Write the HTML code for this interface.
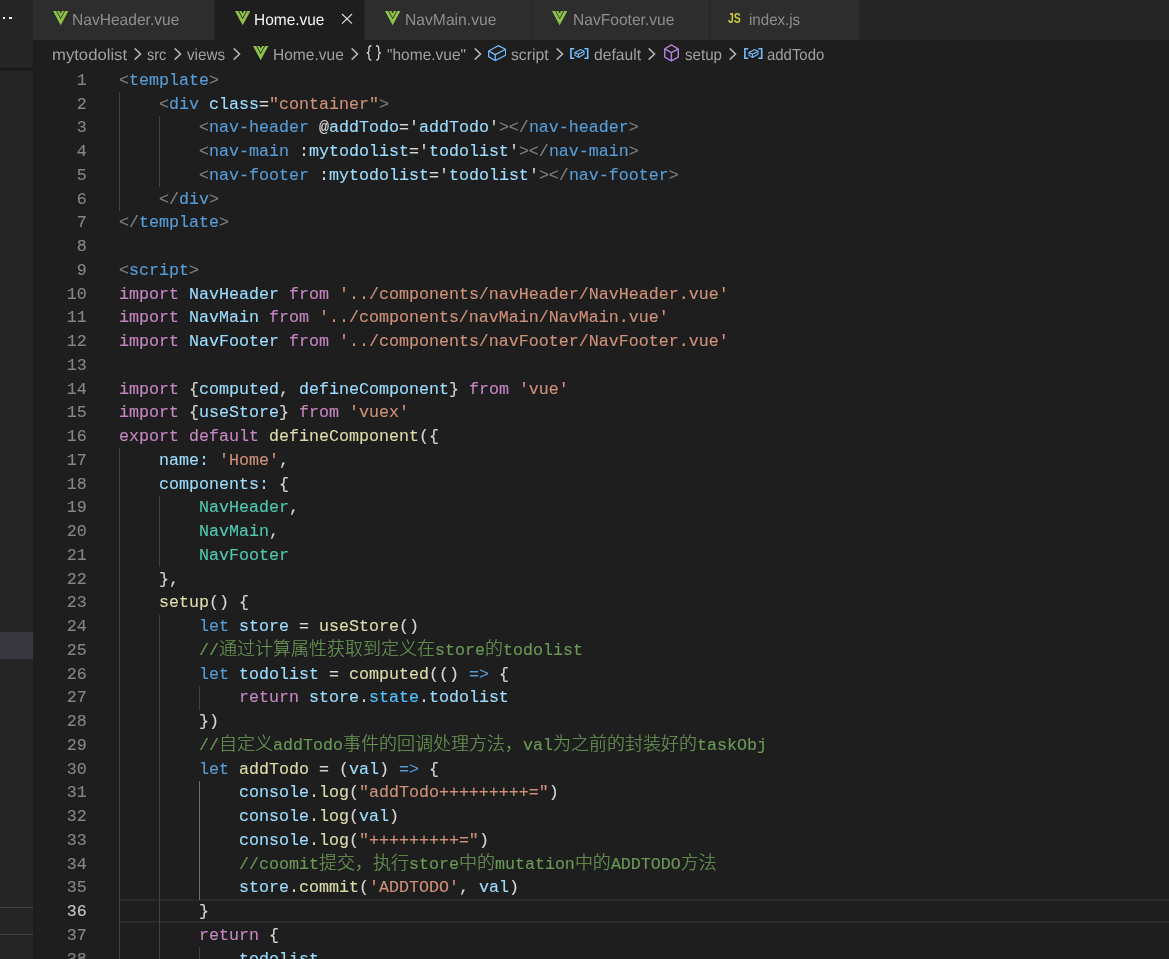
<!DOCTYPE html>
<html lang="zh-CN">
<head>
<meta charset="utf-8">
<title>Home.vue - mytodolist</title>
<style>
html,body{margin:0;padding:0;background:#1e1e1e;}
body{width:1169px;height:959px;overflow:hidden;position:relative;font-family:"Liberation Sans","Noto Sans CJK SC",sans-serif;}
#app{position:absolute;left:0;top:0;width:1169px;height:959px;will-change:transform;}
#side{position:absolute;left:0;top:0;width:33px;height:959px;background:#252526;}
#side .shadow{position:absolute;left:0;top:67px;width:33px;height:5px;background:linear-gradient(#212121 0,#212121 20%,#181818 20%,#181818 40%,#1c1c1c 40%,#1c1c1c 60%,#202020 60%,#202020 80%,#232324 80%,#232324 100%);}
#side .sel{position:absolute;left:0;top:632px;width:33px;height:27px;background:#37373d;}
#side .hr{position:absolute;left:0;width:33px;height:1px;background:#414141;}
#side .dot{position:absolute;top:16.9px;width:2.5px;height:2.3px;background:#f0f0f0;}
#tabs{position:absolute;left:33px;top:0;width:1136px;height:40px;background:#252526;}
.tab{position:absolute;top:0;height:40px;background:#2d2d2d;}
.tab.on{background:#1e1e1e;}
.tt{text-rendering:geometricPrecision;position:absolute;top:8.8px;height:24px;line-height:24px;font-size:16px;transform-origin:0 0;color:#969696;white-space:nowrap;}
.tab.on .tt{color:#ffffff;}
.vue{position:absolute;width:15.75px;height:15px;}
.jsi{position:absolute;font-weight:bold;font-size:13.8px;color:#cbcb41;line-height:14px;transform:scaleX(0.76);transform-origin:0 0;}
#bc{position:absolute;left:33px;top:40px;width:1136px;height:28px;background:#1e1e1e;}
.bt{text-rendering:geometricPrecision;position:absolute;top:43.8px;height:24px;line-height:24px;font-size:16px;transform-origin:0 0;color:#a0a0a0;white-space:nowrap;}
.chev{position:absolute;top:48px;width:8px;height:12px;}
.bi{position:absolute;}
#ed{position:absolute;left:0;top:0;width:1169px;height:959px;font-family:"Liberation Mono","Noto Sans CJK SC",monospace;font-size:16.67px;color:#d4d4d4;-webkit-text-stroke:0.14px;}
.ln{position:absolute;left:33px;width:53.7px;height:23.75px;line-height:23.75px;text-align:right;color:#858585;}
.ln.cur{color:#c6c6c6;}
.cl{position:absolute;left:119px;height:23.75px;line-height:23.75px;white-space:pre;}
.cl i{font-style:normal;font-size:18px;line-height:0;font-weight:300;}
.ig{position:absolute;width:1px;background:#404040;}
.ig.act{background:#707070;}
#curline{position:absolute;left:119px;top:899px;width:1050px;height:19.5px;border-top:2px solid #2a2a2a;border-bottom:2px solid #2a2a2a;}
.g{color:#808080}.t{color:#569cd6}.a{color:#9cdcfe}.s{color:#ce9178}.k{color:#c586c0}.b{color:#569cd6}.f{color:#dcdcaa}.c{color:#4ec9b0}.m{color:#6a9955}.n{color:#4fc1ff}
</style>
</head>
<body>
<div id="app">
<div id="side"><div class="shadow"></div><div class="dot" style="left:2.8px"></div><div class="dot" style="left:8.9px;width:3.1px"></div><div class="sel"></div><div class="hr" style="top:907px"></div><div class="hr" style="top:934px"></div></div>
<div id="tabs">
<div class="tab" style="left:0px;width:181px"></div>
<div class="tab on" style="left:181.5px;width:149.5px"></div>
<div class="tab" style="left:331.5px;width:167.5px"></div>
<div class="tab" style="left:499.5px;width:176.5px"></div>
<div class="tab" style="left:676.5px;width:149.5px"></div>
</div>
<svg class="vue" style="left:52.7px;top:10.8px" preserveAspectRatio="none" viewBox="0 0 16 15"><path fill="#8dc149" d="M0,0H3.25L7.8,8.3L12.35,0H15.6L7.8,14.2Z"/><path fill="#8dc149" d="M4.15,0H6.5L7.8,2.4L9.1,0H11.45L7.8,6.7Z"/></svg>
<div class="tt" style="left:72.3px;transform:scaleX(0.973);color:#8e8e8e">NavHeader.vue</div>
<svg class="vue" style="left:234.7px;top:10.8px" preserveAspectRatio="none" viewBox="0 0 16 15"><path fill="#8dc149" d="M0,0H3.25L7.8,8.3L12.35,0H15.6L7.8,14.2Z"/><path fill="#8dc149" d="M4.15,0H6.5L7.8,2.4L9.1,0H11.45L7.8,6.7Z"/></svg>
<div class="tt" style="left:254.1px;transform:scaleX(0.966);color:#f4f4f4">Home.vue</div>
<svg class="vue" style="left:384.7px;top:10.8px" preserveAspectRatio="none" viewBox="0 0 16 15"><path fill="#8dc149" d="M0,0H3.25L7.8,8.3L12.35,0H15.6L7.8,14.2Z"/><path fill="#8dc149" d="M4.15,0H6.5L7.8,2.4L9.1,0H11.45L7.8,6.7Z"/></svg>
<div class="tt" style="left:404.5px;transform:scaleX(0.979);color:#8e8e8e">NavMain.vue</div>
<svg class="vue" style="left:552.0px;top:10.8px" preserveAspectRatio="none" viewBox="0 0 16 15"><path fill="#8dc149" d="M0,0H3.25L7.8,8.3L12.35,0H15.6L7.8,14.2Z"/><path fill="#8dc149" d="M4.15,0H6.5L7.8,2.4L9.1,0H11.45L7.8,6.7Z"/></svg>
<div class="tt" style="left:572.7px;transform:scaleX(0.974);color:#8e8e8e">NavFooter.vue</div>
<div class="jsi" style="left:727.7px;top:12.1px">JS</div>
<div class="tt" style="left:749.1px;transform:scaleX(0.943);color:#8e8e8e">index.js</div>
<svg style="position:absolute;left:341px;top:12.5px;width:12px;height:12px" viewBox="0 0 12 12"><path stroke="#dcdcdc" stroke-width="1.15" fill="none" d="M1,1L11,10.6M11,1L1,10.6"/></svg>
<div class="bt" style="left:52.2px;transform:scaleX(1.042)">mytodolist</div>
<div class="bt" style="left:146.9px;transform:scaleX(0.906)">src</div>
<div class="bt" style="left:187.4px;transform:scaleX(0.950)">views</div>
<div class="bt" style="left:273px;transform:scaleX(0.971)">Home.vue</div>
<div class="bt" style="left:387.4px;transform:scaleX(0.968)">&quot;home.vue&quot;</div>
<div class="bt" style="left:511.4px;transform:scaleX(0.984)">script</div>
<div class="bt" style="left:594px;transform:scaleX(0.979)">default</div>
<div class="bt" style="left:685px;transform:scaleX(0.946)">setup</div>
<div class="bt" style="left:767px;transform:scaleX(0.933)">addTodo</div>
<svg class="chev" style="left:133.7px" viewBox="0 0 8 12"><path fill="none" stroke="#b4b4b4" stroke-width="1.6" d="M0.7,0.4L6.5,6L0.7,11.6"/></svg>
<svg class="chev" style="left:174.2px" viewBox="0 0 8 12"><path fill="none" stroke="#b4b4b4" stroke-width="1.6" d="M0.7,0.4L6.5,6L0.7,11.6"/></svg>
<svg class="chev" style="left:233.1px" viewBox="0 0 8 12"><path fill="none" stroke="#b4b4b4" stroke-width="1.6" d="M0.7,0.4L6.5,6L0.7,11.6"/></svg>
<svg class="chev" style="left:351.09999999999997px" viewBox="0 0 8 12"><path fill="none" stroke="#b4b4b4" stroke-width="1.6" d="M0.7,0.4L6.5,6L0.7,11.6"/></svg>
<svg class="chev" style="left:473.5px" viewBox="0 0 8 12"><path fill="none" stroke="#b4b4b4" stroke-width="1.6" d="M0.7,0.4L6.5,6L0.7,11.6"/></svg>
<svg class="chev" style="left:555.7px" viewBox="0 0 8 12"><path fill="none" stroke="#b4b4b4" stroke-width="1.6" d="M0.7,0.4L6.5,6L0.7,11.6"/></svg>
<svg class="chev" style="left:648.0px" viewBox="0 0 8 12"><path fill="none" stroke="#b4b4b4" stroke-width="1.6" d="M0.7,0.4L6.5,6L0.7,11.6"/></svg>
<svg class="chev" style="left:729.4000000000001px" viewBox="0 0 8 12"><path fill="none" stroke="#b4b4b4" stroke-width="1.6" d="M0.7,0.4L6.5,6L0.7,11.6"/></svg>
<svg class="vue" style="left:252.8px;top:45.7px" preserveAspectRatio="none" viewBox="0 0 16 15"><path fill="#8dc149" d="M0,0H3.25L7.8,8.3L12.35,0H15.6L7.8,14.2Z"/><path fill="#8dc149" d="M4.15,0H6.5L7.8,2.4L9.1,0H11.45L7.8,6.7Z"/></svg>
<svg class="bi" style="left:365.9px;top:44.6px;width:15.6px;height:16.2px" preserveAspectRatio="none" viewBox="0 0 16 17"><g fill="none" stroke="#d0d0d0" stroke-width="1.35"><path d="M5.6,0.8C3.6,0.8 3,1.6 3,3.2V6.2C3,7.4 2.2,8.1 0.8,8.3C2.2,8.5 3,9.2 3,10.4V13.4C3,15 3.6,15.8 5.6,15.8"/><path d="M10.4,0.8C12.4,0.8 13,1.6 13,3.2V6.2C13,7.4 13.8,8.1 15.2,8.3C13.8,8.5 13,9.2 13,10.4V13.4C13,15 12.4,15.8 10.4,15.8"/></g></svg>
<svg class="bi" style="left:487.7px;top:44.6px;width:18.4px;height:16.6px" preserveAspectRatio="none" viewBox="0 0 19 17"><g fill="none" stroke="#75beff" stroke-width="1.3" stroke-linejoin="round"><path d="M0.7,6.2L10.5,0.7L18.2,4.4L7.5,9.9Z"/><path d="M0.7,6.2V12L7.5,15.9L18.2,10.5V4.4"/><path d="M7.5,9.9V15.9"/></g></svg>
<svg class="bi" style="left:569.7px;top:48px;width:19px;height:11px" viewBox="0 0 19 11"><g fill="none" stroke="#75beff"><path stroke-width="1.6" d="M4.2,0.8H0.9V10.2H4.2"/><path stroke-width="1.6" d="M14.4,0.8H17.7V10.2H14.4"/><g stroke-width="1.1" stroke-linejoin="round"><path d="M5,4.6L10.6,1.6L14,3.2L8.4,6.3Z"/><path d="M5,4.6V7.4L8.4,9.4L14,6.2V3.2"/><path d="M8.4,6.3V9.4"/></g></g></svg>
<svg class="bi" style="left:743.9px;top:48px;width:19px;height:11px" viewBox="0 0 19 11"><g fill="none" stroke="#75beff"><path stroke-width="1.6" d="M4.2,0.8H0.9V10.2H4.2"/><path stroke-width="1.6" d="M14.4,0.8H17.7V10.2H14.4"/><g stroke-width="1.1" stroke-linejoin="round"><path d="M5,4.6L10.6,1.6L14,3.2L8.4,6.3Z"/><path d="M5,4.6V7.4L8.4,9.4L14,6.2V3.2"/><path d="M8.4,6.3V9.4"/></g></g></svg>
<svg class="bi" style="left:663.7px;top:43.8px;width:15.5px;height:18px" preserveAspectRatio="none" viewBox="0 0 16 18"><g fill="none" stroke="#b180d7" stroke-width="1.5" stroke-linejoin="round"><path d="M7.6,0.9L14.7,4.8V13.2L7.6,16.9L0.8,13.2V4.8Z"/><path d="M0.8,4.8L7.6,8.6L14.7,4.8M7.6,8.6V16.9"/></g></svg><div id="ed">
<div id="curline"></div>
<div class="ln" style="top:68.75px">1</div>
<div class="cl" style="top:68.75px"><span class="g">&lt;</span><span class="t">template</span><span class="g">&gt;</span></div>
<div class="ln" style="top:92.50px">2</div>
<div class="cl" style="top:92.50px">    <span class="g">&lt;</span><span class="t">div</span> <span class="a">class</span>=<span class="s">"container"</span><span class="g">&gt;</span></div>
<div class="ln" style="top:116.25px">3</div>
<div class="cl" style="top:116.25px">        <span class="g">&lt;</span><span class="t">nav-header</span> @<span class="a">addTodo</span>='<span class="a">addTodo</span>'<span class="g">&gt;&lt;/</span><span class="t">nav-header</span><span class="g">&gt;</span></div>
<div class="ln" style="top:140.00px">4</div>
<div class="cl" style="top:140.00px">        <span class="g">&lt;</span><span class="t">nav-main</span> :<span class="a">mytodolist</span>='<span class="a">todolist</span>'<span class="g">&gt;&lt;/</span><span class="t">nav-main</span><span class="g">&gt;</span></div>
<div class="ln" style="top:163.75px">5</div>
<div class="cl" style="top:163.75px">        <span class="g">&lt;</span><span class="t">nav-footer</span> :<span class="a">mytodolist</span>='<span class="a">todolist</span>'<span class="g">&gt;&lt;/</span><span class="t">nav-footer</span><span class="g">&gt;</span></div>
<div class="ln" style="top:187.50px">6</div>
<div class="cl" style="top:187.50px">    <span class="g">&lt;/</span><span class="t">div</span><span class="g">&gt;</span></div>
<div class="ln" style="top:211.25px">7</div>
<div class="cl" style="top:211.25px"><span class="g">&lt;/</span><span class="t">template</span><span class="g">&gt;</span></div>
<div class="ln" style="top:235.00px">8</div>
<div class="ln" style="top:258.75px">9</div>
<div class="cl" style="top:258.75px"><span class="g">&lt;</span><span class="t">script</span><span class="g">&gt;</span></div>
<div class="ln" style="top:282.50px">10</div>
<div class="cl" style="top:282.50px"><span class="k">import</span> <span class="a">NavHeader</span> <span class="k">from</span> <span class="s">'../components/navHeader/NavHeader.vue'</span></div>
<div class="ln" style="top:306.25px">11</div>
<div class="cl" style="top:306.25px"><span class="k">import</span> <span class="a">NavMain</span> <span class="k">from</span> <span class="s">'../components/navMain/NavMain.vue'</span></div>
<div class="ln" style="top:330.00px">12</div>
<div class="cl" style="top:330.00px"><span class="k">import</span> <span class="a">NavFooter</span> <span class="k">from</span> <span class="s">'../components/navFooter/NavFooter.vue'</span></div>
<div class="ln" style="top:353.75px">13</div>
<div class="ln" style="top:377.50px">14</div>
<div class="cl" style="top:377.50px"><span class="k">import</span> {<span class="a">computed</span>, <span class="a">defineComponent</span>} <span class="k">from</span> <span class="s">'vue'</span></div>
<div class="ln" style="top:401.25px">15</div>
<div class="cl" style="top:401.25px"><span class="k">import</span> {<span class="a">useStore</span>} <span class="k">from</span> <span class="s">'vuex'</span></div>
<div class="ln" style="top:425.00px">16</div>
<div class="cl" style="top:425.00px"><span class="k">export</span> <span class="k">default</span> <span class="f">defineComponent</span>({</div>
<div class="ln" style="top:448.75px">17</div>
<div class="cl" style="top:448.75px">    <span class="a">name:</span> <span class="s">'Home'</span>,</div>
<div class="ln" style="top:472.50px">18</div>
<div class="cl" style="top:472.50px">    <span class="a">components:</span> {</div>
<div class="ln" style="top:496.25px">19</div>
<div class="cl" style="top:496.25px">        <span class="c">NavHeader</span>,</div>
<div class="ln" style="top:520.00px">20</div>
<div class="cl" style="top:520.00px">        <span class="c">NavMain</span>,</div>
<div class="ln" style="top:543.75px">21</div>
<div class="cl" style="top:543.75px">        <span class="c">NavFooter</span></div>
<div class="ln" style="top:567.50px">22</div>
<div class="cl" style="top:567.50px">    },</div>
<div class="ln" style="top:591.25px">23</div>
<div class="cl" style="top:591.25px">    <span class="f">setup</span>() {</div>
<div class="ln" style="top:615.00px">24</div>
<div class="cl" style="top:615.00px">        <span class="b">let</span> <span class="a">store</span> = <span class="f">useStore</span>()</div>
<div class="ln" style="top:638.75px">25</div>
<div class="cl" style="top:638.75px">        <span class="m">//<i>通过计算属性获取到定义在</i>store<i>的</i>todolist</span></div>
<div class="ln" style="top:662.50px">26</div>
<div class="cl" style="top:662.50px">        <span class="b">let</span> <span class="a">todolist</span> = <span class="f">computed</span>(() <span class="b">=&gt;</span> {</div>
<div class="ln" style="top:686.25px">27</div>
<div class="cl" style="top:686.25px">            <span class="k">return</span> <span class="a">store</span>.<span class="n">state</span>.<span class="a">todolist</span></div>
<div class="ln" style="top:710.00px">28</div>
<div class="cl" style="top:710.00px">        })</div>
<div class="ln" style="top:733.75px">29</div>
<div class="cl" style="top:733.75px">        <span class="m">//<i>自定义</i>addTodo<i>事件的回调处理方法，</i>val<i>为之前的封装好的</i>taskObj</span></div>
<div class="ln" style="top:757.50px">30</div>
<div class="cl" style="top:757.50px">        <span class="b">let</span> <span class="f">addTodo</span> = (<span class="a">val</span>) <span class="b">=&gt;</span> {</div>
<div class="ln" style="top:781.25px">31</div>
<div class="cl" style="top:781.25px">            <span class="a">console</span>.<span class="f">log</span>(<span class="s">"addTodo+++++++++="</span>)</div>
<div class="ln" style="top:805.00px">32</div>
<div class="cl" style="top:805.00px">            <span class="a">console</span>.<span class="f">log</span>(<span class="a">val</span>)</div>
<div class="ln" style="top:828.75px">33</div>
<div class="cl" style="top:828.75px">            <span class="a">console</span>.<span class="f">log</span>(<span class="s">"+++++++++="</span>)</div>
<div class="ln" style="top:852.50px">34</div>
<div class="cl" style="top:852.50px">            <span class="m">//coomit<i>提交，执行</i>store<i>中的</i>mutation<i>中的</i>ADDTODO<i>方法</i></span></div>
<div class="ln" style="top:876.25px">35</div>
<div class="cl" style="top:876.25px">            <span class="a">store</span>.<span class="f">commit</span>(<span class="s">'ADDTODO'</span>, <span class="a">val</span>)</div>
<div class="ln cur" style="top:900.00px">36</div>
<div class="cl" style="top:900.00px">        }</div>
<div class="ln" style="top:923.75px">37</div>
<div class="cl" style="top:923.75px">        <span class="k">return</span> {</div>
<div class="ln" style="top:947.50px">38</div>
<div class="cl" style="top:947.50px">            <span class="a">todolist</span>,</div>
<div class="ig" style="left:119px;top:92.00px;height:118.75px"></div>
<div class="ig" style="left:159px;top:115.75px;height:71.25px"></div>
<div class="ig" style="left:119px;top:448.25px;height:522.50px"></div>
<div class="ig" style="left:159px;top:495.75px;height:71.25px"></div>
<div class="ig" style="left:159px;top:614.50px;height:356.25px"></div>
<div class="ig" style="left:199px;top:685.75px;height:23.75px"></div>
<div class="ig act" style="left:199px;top:780.75px;height:118.75px"></div>
<div class="ig" style="left:199px;top:947.00px;height:23.75px"></div></div>
</div></body></html>
